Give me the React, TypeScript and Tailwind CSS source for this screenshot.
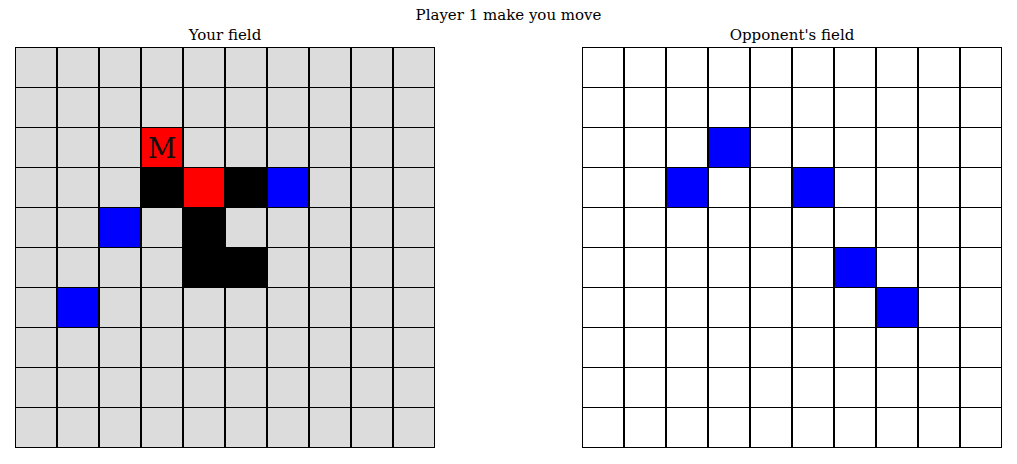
import React from 'react';

type Cell = 'empty' | 'ship' | 'hit' | 'miss' | 'me';

const SIZE = 10;

const myMarks: Record<string, Cell> = {
  '2-3': 'me',
  '3-3': 'ship',
  '3-4': 'hit',
  '3-5': 'ship',
  '3-6': 'miss',
  '4-2': 'miss',
  '4-4': 'ship',
  '5-4': 'ship',
  '5-5': 'ship',
  '6-1': 'miss',
};

const enemyMarks: Record<string, Cell> = {
  '2-3': 'miss',
  '3-2': 'miss',
  '3-5': 'miss',
  '5-6': 'miss',
  '6-7': 'miss',
};

const cellColor = (c: Cell, own: boolean) => {
  if (c === 'ship') return 'bg-black';
  if (c === 'hit' || c === 'me') return 'bg-[#ff0000]';
  if (c === 'miss') return 'bg-[#0000ff]';
  return own ? 'bg-[#dcdcdc]' : 'bg-white';
};

const Field: React.FC<{ title: string; marks: Record<string, Cell>; own: boolean }> = ({ title, marks, own }) => {
  const rows = Array.from({ length: SIZE }, (_, r) => r);
  return (
    <div className="flex flex-col items-center">
      <div className="h-[23px] leading-[23px] text-[15px]">{title}</div>
      <div className="flex flex-col">
        {rows.map((r) => (
          <div key={r} className="flex">
            {rows.map((c) => {
              const v = marks[`${r}-${c}`] ?? 'empty';
              return (
                <div
                  key={c}
                  className={`w-[42px] h-[40px] border-x border-t border-black flex items-center justify-center ${r === SIZE - 1 ? 'h-[41px] border-b' : ''} ${cellColor(v, own)}`}
                >
                  {v === 'me' && <span className="text-[28px] leading-none text-[#111] mt-[3px]">M</span>}
                </div>
              );
            })}
          </div>
        ))}
      </div>
    </div>
  );
};

export default function App() {
  return (
    <div className="w-[1017px] h-[464px] bg-white text-black font-['DejaVu_Serif',serif]">
      <div className="pt-[5px] h-[24px] leading-[20px] text-center text-[15px]">Player 1 make you move</div>
      <div className="flex justify-between px-[15px]">
        <Field title="Your field" marks={myMarks} own />
        <Field title="Opponent's field" marks={enemyMarks} own={false} />
      </div>
    </div>
  );
}
